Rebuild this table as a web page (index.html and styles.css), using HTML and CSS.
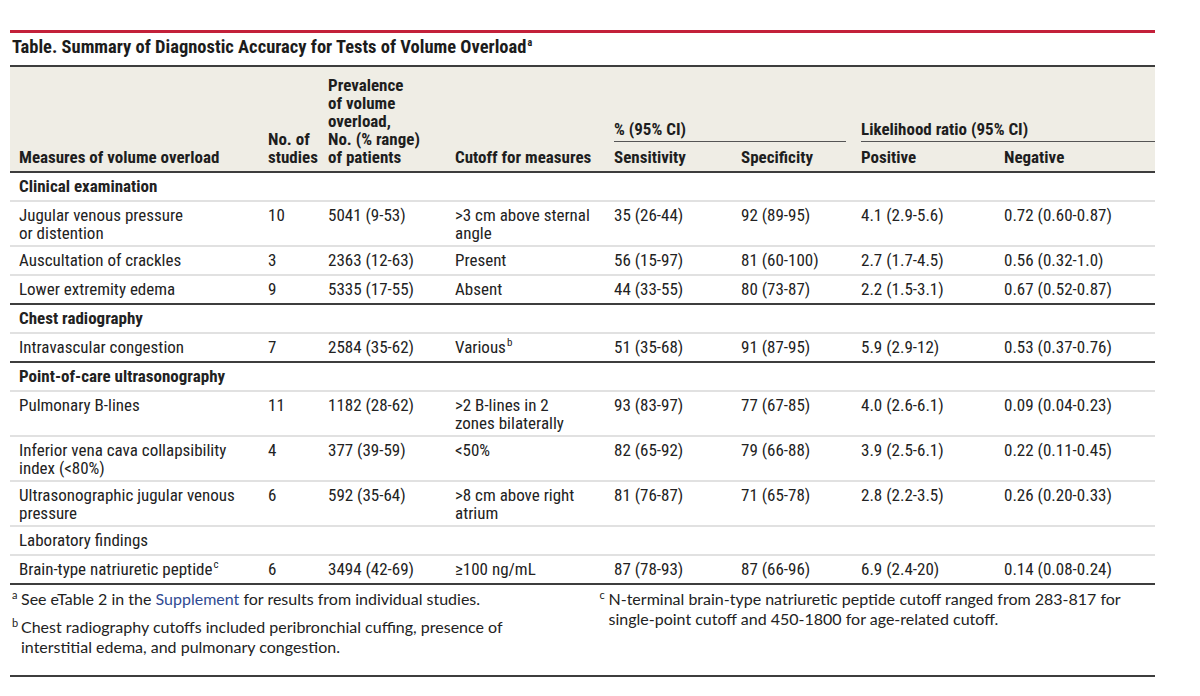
FILE: index.html
```html
<!DOCTYPE html>
<html lang="en">
<head>
<meta charset="utf-8">
<title>Table. Summary of Diagnostic Accuracy for Tests of Volume Overload</title>
<link rel="stylesheet" href="styles.css">
</head>
<body>
<div class="page">
  <div class="topbar"></div>
  <h1 class="title">Table. Summary of Diagnostic Accuracy for Tests of Volume Overload<sup>a</sup></h1>
  <table class="data">
    <colgroup>
      <col class="w1"><col class="w2"><col class="w3"><col class="w4">
      <col class="w5"><col class="w6"><col class="w7"><col class="w8">
    </colgroup>
    <thead>
      <tr class="r1">
        <th rowspan="2" class="tall">Measures of volume overload</th>
        <th rowspan="2" class="tall">No. of<br>studies</th>
        <th rowspan="2" class="tall">Prevalence<br>of volume<br>overload,<br>No. (% range)<br>of patients</th>
        <th rowspan="2" class="tall">Cutoff for measures</th>
        <th colspan="2" class="group"><div class="grp">% (95% CI)</div></th>
        <th colspan="2" class="group last"><div class="grp">Likelihood ratio (95% CI)</div></th>
      </tr>
      <tr class="r2">
        <th class="sub">Sensitivity</th>
        <th class="sub">Specificity</th>
        <th class="sub">Positive</th>
        <th class="sub">Negative</th>
      </tr>
    </thead>
    <tbody>
      <tr class="sec"><td colspan="8">Clinical examination</td></tr>
      <tr class="two">
        <td>Jugular venous pressure<br>or distention</td><td>10</td><td>5041 (9-53)</td><td>&gt;3 cm above sternal<br>angle</td>
        <td>35 (26-44)</td><td>92 (89-95)</td><td>4.1 (2.9-5.6)</td><td>0.72 (0.60-0.87)</td>
      </tr>
      <tr>
        <td>Auscultation of crackles</td><td>3</td><td>2363 (12-63)</td><td>Present</td>
        <td>56 (15-97)</td><td>81 (60-100)</td><td>2.7 (1.7-4.5)</td><td>0.56 (0.32-1.0)</td>
      </tr>
      <tr class="dark">
        <td>Lower extremity edema</td><td>9</td><td>5335 (17-55)</td><td>Absent</td>
        <td>44 (33-55)</td><td>80 (73-87)</td><td>2.2 (1.5-3.1)</td><td>0.67 (0.52-0.87)</td>
      </tr>
      <tr class="sec"><td colspan="8">Chest radiography</td></tr>
      <tr class="dark">
        <td>Intravascular congestion</td><td>7</td><td>2584 (35-62)</td><td>Various<sup>b</sup></td>
        <td>51 (35-68)</td><td>91 (87-95)</td><td>5.9 (2.9-12)</td><td>0.53 (0.37-0.76)</td>
      </tr>
      <tr class="sec"><td colspan="8">Point-of-care ultrasonography</td></tr>
      <tr class="two">
        <td>Pulmonary B-lines</td><td>11</td><td>1182 (28-62)</td><td>&gt;2 B-lines in 2<br>zones bilaterally</td>
        <td>93 (83-97)</td><td>77 (67-85)</td><td>4.0 (2.6-6.1)</td><td>0.09 (0.04-0.23)</td>
      </tr>
      <tr class="two">
        <td>Inferior vena cava collapsibility<br>index (&lt;80%)</td><td>4</td><td>377 (39-59)</td><td>&lt;50%</td>
        <td>82 (65-92)</td><td>79 (66-88)</td><td>3.9 (2.5-6.1)</td><td>0.22 (0.11-0.45)</td>
      </tr>
      <tr class="two">
        <td>Ultrasonographic jugular venous<br>pressure</td><td>6</td><td>592 (35-64)</td><td>&gt;8 cm above right<br>atrium</td>
        <td>81 (76-87)</td><td>71 (65-78)</td><td>2.8 (2.2-3.5)</td><td>0.26 (0.20-0.33)</td>
      </tr>
      <tr><td colspan="8">Laboratory findings</td></tr>
      <tr class="dark">
        <td>Brain-type natriuretic peptide<sup>c</sup></td><td>6</td><td>3494 (42-69)</td><td>≥100 ng/mL</td>
        <td>87 (78-93)</td><td>87 (66-96)</td><td>6.9 (2.4-20)</td><td>0.14 (0.08-0.24)</td>
      </tr>
    </tbody>
  </table>
  <div class="notes">
    <div class="col">
      <p class="note"><sup>a</sup>See eTable 2 in the <a href="#">Supplement</a> for results from individual studies.</p>
      <p class="note"><sup>b</sup>Chest radiography cutoffs included peribronchial cuffing, presence of interstitial edema, and pulmonary congestion.</p>
    </div>
    <div class="col">
      <p class="note"><sup>c</sup>N-terminal brain-type natriuretic peptide cutoff ranged from 283-817 for single-point cutoff and 450-1800 for age-related cutoff.</p>
    </div>
  </div>
</div>
</body>
</html>
```
FILE: styles.css
```css
html, body {
  margin: 0;
  padding: 0;
  background: #ffffff;
}

body {
  color: #222222;
  font-family: "Roboto Condensed", "DejaVu Sans Condensed", sans-serif;
}

.page {
  width: 1145px;
  margin-left: 10px;
  padding-top: 30px;
}

.topbar {
  height: 3px;
  background: #c3203a;
}

.title {
  margin: 0;
  padding: 3px 0 7px 2px;
  font-size: 18.5px;
  line-height: 22px;
  font-weight: 700;
  color: #1c1c1c;
  border-bottom: 2px solid #3d3d3d;
}

.title sup {
  font-size: 10px;
  line-height: 0;
  vertical-align: 7px;
  margin-left: 1px;
}

.data {
  width: 1145px;
  table-layout: fixed;
  border-collapse: separate;
  border-spacing: 0;
}

.w1 { width: 249px; }
.w2 { width: 60px; }
.w3 { width: 127px; }
.w4 { width: 159px; }
.w5 { width: 127px; }
.w6 { width: 120px; }
.w7 { width: 143px; }
.w8 { width: 160px; }

.data thead tr.r1 { height: 75px; }
.data thead tr.r2 { height: 31px; }

.data th {
  background: #efede5;
  text-align: left;
  font-weight: 700;
  font-size: 17px;
  line-height: 18px;
  vertical-align: bottom;
  white-space: nowrap;
  color: #1e1e1e;
}

.data th.tall {
  padding: 9px 0 5px 9px;
  border-bottom: 2px solid #3d3d3d;
}

.data th.group {
  padding: 0 6px 0 9px;
}

.data th.group.last {
  padding-right: 0;
}

.grp {
  padding-bottom: 3px;
  border-bottom: 1px solid #555555;
}

.data th.sub {
  padding: 6px 0 5px 9px;
  border-bottom: 2px solid #3d3d3d;
}

.data td {
  font-size: 17px;
  line-height: 18px;
  padding: 4px 4px 5px 9px;
  vertical-align: top;
  border-bottom: 2px solid #e1e1e1;
  white-space: nowrap;
}

.data tr.two td {
  padding-bottom: 3px;
}

.data tr.sec td {
  font-weight: 700;
}

.data tr.dark td {
  border-bottom-color: #3d3d3d;
}

.data sup {
  font-size: 11px;
  line-height: 0;
  vertical-align: 7px;
  margin-left: 1px;
}

.notes {
  display: grid;
  grid-template-columns: 1fr 1fr;
  column-gap: 30px;
  padding: 4px 0 10px;
  border-bottom: 2px solid #3d3d3d;
  font-family: Lato, "Liberation Sans", sans-serif;
  font-size: 16px;
  line-height: 20px;
  color: #222222;
}

.note {
  position: relative;
  margin: 0 0 8px;
  padding-left: 11px;
}

.note sup {
  position: absolute;
  left: 2px;
  top: -4px;
  font-size: 11px;
  line-height: 20px;
}

.note a {
  color: #2f4a92;
  text-decoration: none;
}
```
